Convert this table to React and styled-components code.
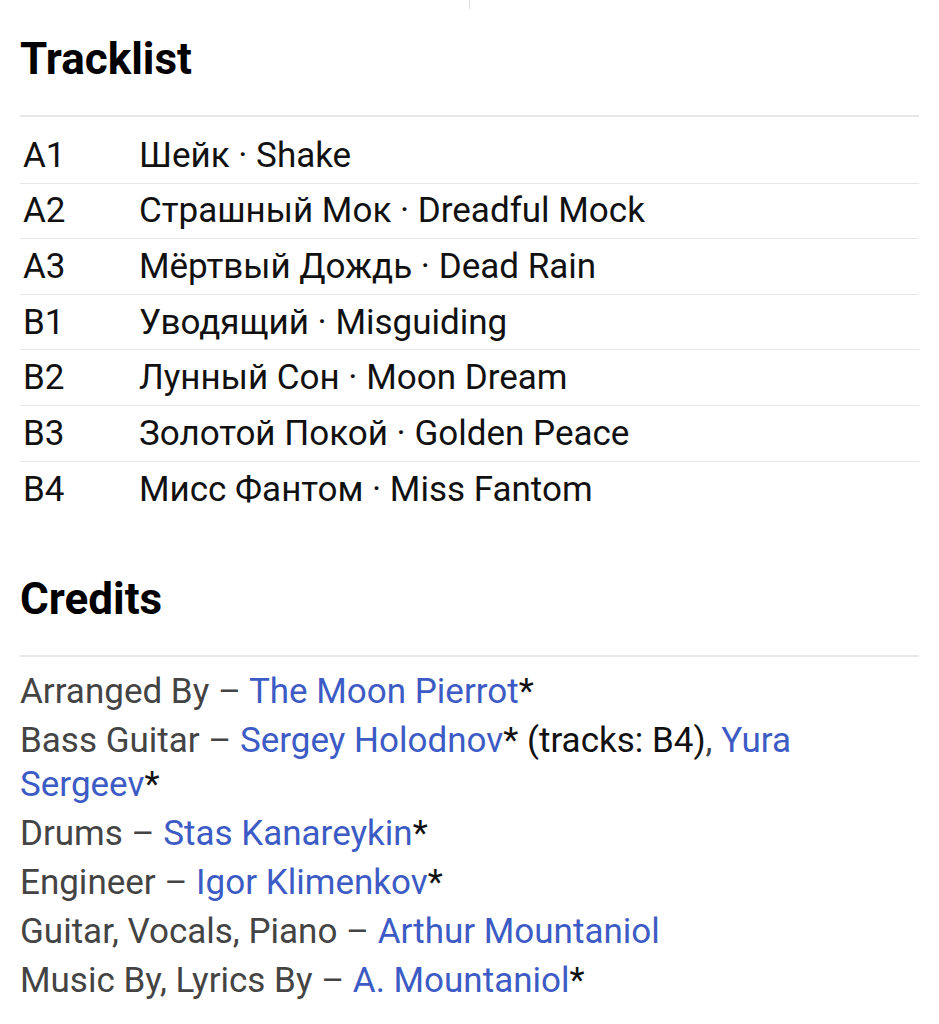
import React from "react";
import styled, { createGlobalStyle } from "styled-components";

const Global = createGlobalStyle`
  html, body { margin: 0; padding: 0; background: #fff; }
  body { font-family: Roboto, "Noto Sans", Arial, sans-serif; color: #111; }
`;

const Page = styled.div`
  width: 939px;
  padding: 0 20px 40px;
  box-sizing: border-box;
  display: flex;
  flex-direction: column;
`;

const TopDivider = styled.div`
  align-self: center;
  width: 1px;
  height: 9px;
  background: #ddd;
`;

const Section = styled.section`
  display: flex;
  flex-direction: column;
  margin-top: ${(p) => p.$top}px;
`;

const Heading = styled.h2`
  margin: 0;
  font-family: Roboto, Arial, sans-serif;
  font-weight: 700;
  font-size: 44px;
  line-height: 48px;
  color: #000;
  padding-bottom: 32px;
  border-bottom: 2px solid #e8e8e8;
`;

const Tracks = styled.div`
  display: flex;
  flex-direction: column;
  margin-top: 11px;
`;

const TrackRow = styled.div`
  display: grid;
  grid-template-columns: 119px 1fr;
  align-items: center;
  height: 55.6px;
  font-size: 35px;
  color: #111;
  border-bottom: ${(p) => (p.$last ? "none" : "1.5px solid #e6e6e6")};
  box-sizing: border-box;
`;

const Pos = styled.span`
  padding-left: 3px;
`;

const Credits = styled.div`
  display: flex;
  flex-direction: column;
  gap: 5px;
  margin-top: 13px;
`;

const Credit = styled.div`
  font-size: 35px;
  line-height: 44px;
  color: #444;
`;

const Link = styled.a`
  color: #3d5bc4;
  text-decoration: none;
`;

const Star = styled.span`
  color: #111;
`;

const tracks = [
  ["A1", "Шейк · Shake"],
  ["A2", "Страшный Мок · Dreadful Mock"],
  ["A3", "Мёртвый Дождь · Dead Rain"],
  ["B1", "Уводящий · Misguiding"],
  ["B2", "Лунный Сон · Moon Dream"],
  ["B3", "Золотой Покой · Golden Peace"],
  ["B4", "Мисс Фантом · Miss Fantom"],
];

export default function App() {
  return (
    <>
      <Global />
      <Page>
        <TopDivider />
        <Section $top={26}>
          <Heading>Tracklist</Heading>
          <Tracks>
            {tracks.map(([p, t], i) => (
              <TrackRow key={p} $last={i === tracks.length - 1}>
                <Pos>{p}</Pos>
                <span>{t}</span>
              </TrackRow>
            ))}
          </Tracks>
        </Section>
        <Section $top={58}>
          <Heading>Credits</Heading>
          <Credits>
            <Credit>
              Arranged By – <Link href="#">The Moon Pierrot</Link><Star>*</Star>
            </Credit>
            <Credit>
              Bass Guitar – <Link href="#">Sergey Holodnov</Link><Star>* (tracks: B4)</Star>, <Link href="#">Yura Sergeev</Link><Star>*</Star>
            </Credit>
            <Credit>
              Drums – <Link href="#">Stas Kanareykin</Link><Star>*</Star>
            </Credit>
            <Credit>
              Engineer – <Link href="#">Igor Klimenkov</Link><Star>*</Star>
            </Credit>
            <Credit>
              Guitar, Vocals, Piano – <Link href="#">Arthur Mountaniol</Link>
            </Credit>
            <Credit>
              Music By, Lyrics By – <Link href="#">A. Mountaniol</Link><Star>*</Star>
            </Credit>
          </Credits>
        </Section>
      </Page>
    </>
  );
}
